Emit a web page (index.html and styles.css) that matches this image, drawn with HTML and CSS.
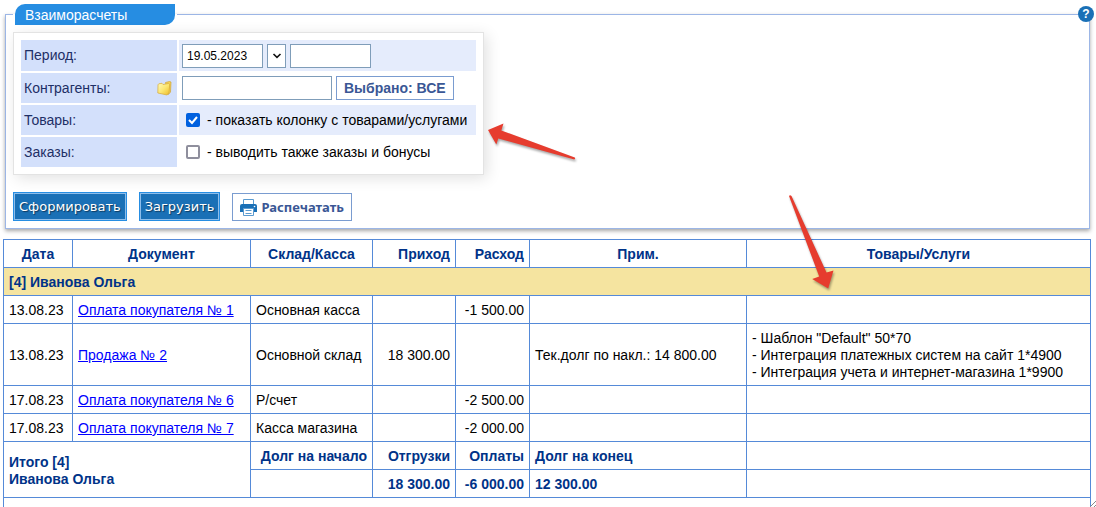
FILE: index.html
```html
<!DOCTYPE html>
<html lang="ru">
<head>
<meta charset="utf-8">
<title>Взаиморасчеты</title>
<link rel="stylesheet" href="styles.css">
</head>
<body>
<main class="page">
  <form class="report-form">
    <fieldset class="report-box">
      <legend class="report-legend"><span class="report-title">Взаиморасчеты</span></legend>
      <div class="panel">
        <table class="params">
          <tr class="shaded">
            <th scope="row"><label for="date-from">Период:</label></th>
            <td>
              <div class="fields">
                <input class="box date" id="date-from" type="text" value="19.05.2023">
                <button class="box picker" type="button" aria-label="Выбрать период">
                  <svg width="10" height="6" viewBox="0 0 10 6"><path d="M1.500 1l3.500 3.400L8.500 1" fill="none" stroke="#111" stroke-width="1.600"/></svg>
                </button>
                <input class="box date" type="text" aria-label="Конец периода">
              </div>
            </td>
          </tr>
          <tr>
            <th scope="row">
              <div class="label-row">
                <label for="partners">Контрагенты:</label>
                <svg class="folder" width="16" height="16" viewBox="0 0 16 16">
                  <defs><linearGradient id="fold" x1="0" y1="0" x2="1" y2="1"><stop offset="0" stop-color="#fffab8"/><stop offset=".5" stop-color="#fbe672"/><stop offset="1" stop-color="#eebb25"/></linearGradient></defs>
                  <path d="M8.500 2.500l4-1 1.500.5-.5 10-2 2.500z" fill="#f3d255" stroke="#cfa23a" stroke-width=".7"/>
                  <path d="M1 4.800l.8-1 3.200-.5 1 1.200 5.500-1 1.200.8-.6 8-2 2.700L.8 13z" fill="url(#fold)" stroke="#d5a93a" stroke-width=".7"/>
                </svg>
              </div>
            </th>
            <td>
              <div class="fields">
                <input class="box partner" id="partners" type="text">
                <button class="box chosen" type="button">Выбрано: ВСЕ</button>
              </div>
            </td>
          </tr>
          <tr class="shaded">
            <th scope="row">Товары:</th>
            <td><label class="check"><input type="checkbox" checked><span>- показать колонку с товарами/услугами</span></label></td>
          </tr>
          <tr>
            <th scope="row">Заказы:</th>
            <td><label class="check"><input type="checkbox"><span>- выводить также заказы и бонусы</span></label></td>
          </tr>
        </table>
      </div>
      <div class="actions">
        <button class="primary" type="button">Сформировать</button>
        <button class="primary" type="button">Загрузить</button>
        <button class="box print" type="button">
          <svg width="17" height="18" viewBox="0 0 17 18">
            <path d="M3.500 6V1.500h10V6" fill="#fff" stroke="#5b9bd0"/>
            <path d="M2 6h13q2 0 2 2v6h-3v-3H3v3H0V8q0-2 2-2z" fill="#1a70b6"/>
            <path d="M3.500 10.500h10v7h-10z" fill="#fff" stroke="#5b9bd0"/>
            <path d="M5.500 12.500h6M5.500 15.500h6" stroke="#5b9bd0"/>
            <circle cx="14.500" cy="8.500" r=".8" fill="#fff"/>
          </svg>
          <span>Распечатать</span>
        </button>
      </div>
    </fieldset>
    <button class="help" type="button" aria-label="Справка">?</button>
  </form>

  <table class="ledger">
    <colgroup>
      <col class="c-date"><col class="c-doc"><col class="c-store"><col class="c-in"><col class="c-out"><col class="c-note"><col>
    </colgroup>
    <thead>
      <tr><th>Дата</th><th>Документ</th><th>Склад/Касса</th><th class="num">Приход</th><th class="num">Расход</th><th>Прим.</th><th>Товары/Услуги</th></tr>
    </thead>
    <tbody>
      <tr class="group"><th colspan="7">[4] Иванова Ольга</th></tr>
      <tr><td>13.08.23</td><td><a href="#">Оплата покупателя № 1</a></td><td>Основная касса</td><td></td><td class="num">-1 500.00</td><td></td><td></td></tr>
      <tr><td>13.08.23</td><td><a href="#">Продажа № 2</a></td><td>Основной склад</td><td class="num">18 300.00</td><td></td><td>Тек.долг по накл.: 14 800.00</td><td>- Шаблон "Default" 50*70<br>- Интеграция платежных систем на сайт 1*4900<br>- Интеграция учета и интернет-магазина 1*9900</td></tr>
      <tr><td>17.08.23</td><td><a href="#">Оплата покупателя № 6</a></td><td>Р/счет</td><td></td><td class="num">-2 500.00</td><td></td><td></td></tr>
      <tr><td>17.08.23</td><td><a href="#">Оплата покупателя № 7</a></td><td>Касса магазина</td><td></td><td class="num">-2 000.00</td><td></td><td></td></tr>
      <tr class="total"><td colspan="2" rowspan="2">Итого [4]<br>Иванова Ольга</td><td class="num">Долг на начало</td><td class="num">Отгрузки</td><td class="num">Оплаты</td><td>Долг на конец</td><td></td></tr>
      <tr class="total"><td></td><td class="num">18 300.00</td><td class="num">-6 000.00</td><td>12 300.00</td><td></td></tr>
      <tr><td colspan="7"></td></tr>
    </tbody>
  </table>

  <svg class="arrow arrow-option" width="92" height="42" viewBox="486 122 92 42">
    <path d="M488 130l15.500-6.500-2.200 7 73.500 27q1 1-.5 2l-76-21-2 6z" fill="#e63c2e"/>
  </svg>
  <svg class="arrow arrow-column" width="52" height="100" viewBox="786 192 52 100">
    <path d="M789 196q1-1.500 2.500 0l35 76.500 7-2-5.300 18-16-9.500 7-2.500z" fill="#e63c2e"/>
  </svg>
  <svg class="grip" width="6" height="6" viewBox="0 0 6 6"><path d="M0 6l6-6M4 6l2-2" stroke="#888" fill="none"/></svg>
</main>
</body>
</html>
```
FILE: styles.css
```css
* { box-sizing: border-box; }

body {
  margin: 0;
  background: #fff;
  color: #000;
  font: 14px/17px "Liberation Sans", Arial, sans-serif;
}

.page {
  position: relative;
  height: 100vh;
  overflow: hidden;
  padding: 4px 5px 0 3px;
}

.report-form {
  position: relative;
  margin: 0 1px 10px 2px;
}

/* Report parameters */
.report-box {
  margin: 0;
  min-width: 0;
  padding: 7px;
  border: 1px solid #9cb6e6;
  box-shadow: 0 2px 4px rgba(0, 0, 0, 0.35);
}

.report-legend {
  padding: 0 2px;
}

.report-title {
  display: block;
  width: 160px;
  height: 21px;
  padding: 0 10px;
  border-radius: 10px 0 10px 0;
  background: #268de2;
  color: #fff;
  line-height: 22px;
}

.panel {
  width: max-content;
  padding: 5px;
  border: 1px solid #e3e3e3;
  box-shadow: 3px 3px 14px rgba(0, 0, 0, 0.12);
}

.params {
  border-spacing: 2px;
}

.params th {
  width: 156px;
  height: 30px;
  padding: 0 3px;
  background: #d3e0fb;
  color: #1e2f66;
  font-weight: normal;
  text-align: left;
}

.params tr:first-child th {
  height: 31px;
}

.params td {
  width: 297px;
  padding: 3px;
}

.shaded td {
  background: #e5ecfc;
}

.label-row {
  display: flex;
  align-items: center;
  justify-content: space-between;
}

.folder {
  margin-right: 1px;
}

.fields {
  display: flex;
  gap: 4px;
}

.box {
  height: 24px;
  margin: 0;
  border: 1px solid #7f9db9;
  border-radius: 0;
  background: #fff;
}

.date {
  width: 81px;
  padding: 0 4px;
  color: #000;
  font: 12px "Liberation Sans", Arial, sans-serif;
}

.picker {
  width: 19px;
  display: flex;
  align-items: center;
  justify-content: center;
  padding: 0;
}

.partner {
  width: 150px;
}

.chosen {
  padding: 0 7px;
  border-color: #7a9cd0;
  color: #3a5795;
  font: bold 14px "Liberation Sans", Arial, sans-serif;
}

.check {
  display: flex;
  align-items: center;
  gap: 7px;
  padding-left: 4px;
}

.check input {
  appearance: none;
  width: 14px;
  height: 14px;
  margin: 0;
  border: 2px solid #8f8f9d;
  border-radius: 2px;
  background: #fff;
}

.check input:checked {
  border: 0;
  background: #0060df url("data:image/svg+xml,%3Csvg xmlns='http://www.w3.org/2000/svg' viewBox='0 0 14 14'%3E%3Cpath d='M3 7l3 3 5-6' fill='none' stroke='white' stroke-width='2'/%3E%3C/svg%3E");
}

.actions {
  display: flex;
  align-items: center;
  gap: 12px;
  margin-top: 17px;
}

.primary {
  height: 29px;
  padding: 0 5px;
  border: 1px solid #268de2;
  background: #1a70b6;
  box-shadow: inset 0 0 0 1px #8dbdea;
  color: #fff;
  font: 13px "DejaVu Sans", Verdana, sans-serif;
  text-shadow: 1px 1px 1px rgba(0, 0, 0, 0.5);
}

.print {
  display: flex;
  align-items: center;
  gap: 4px;
  height: 28px;
  padding: 0 7px;
  border-color: #7a9cd0;
  color: #3a5795;
  font: bold 13px "Noto Sans", "Open Sans", sans-serif;
}

.help {
  position: absolute;
  top: 2px;
  right: -4px;
  width: 16px;
  height: 16px;
  padding: 0;
  border: 0;
  border-radius: 50%;
  background: #1a70b6;
  color: #fff;
  font: bold 12px/16px "Liberation Sans", Arial, sans-serif;
}

/* Settlements table */
.ledger {
  width: 100%;
  table-layout: fixed;
  border-spacing: 0;
  border: 1px solid #558ad8;
  border-width: 1px 0 0 1px;
}

.c-date { width: 69px; }
.c-doc { width: 178px; }
.c-store { width: 122px; }
.c-in { width: 83px; }
.c-out { width: 74px; }
.c-note { width: 217px; }

.ledger th,
.ledger td {
  height: 28px;
  padding: 6px 5px 4px;
  border: 1px solid #558ad8;
  border-width: 0 1px 1px 0;
  white-space: nowrap;
}

.ledger th,
.total td {
  color: #003388;
  font-weight: bold;
}

.ledger .num {
  text-align: right;
}

.ledger .group th {
  background: #f5e4a0;
  text-align: left;
}

.ledger a {
  color: #00f;
}

/* Annotations over the page */
.arrow {
  position: absolute;
  filter: drop-shadow(1px 2px 1px rgba(0, 0, 0, 0.35));
}

.arrow-option {
  left: 486px;
  top: 122px;
}

.arrow-column {
  left: 786px;
  top: 192px;
}

.grip {
  position: absolute;
  right: 0;
  bottom: 0;
}
```
